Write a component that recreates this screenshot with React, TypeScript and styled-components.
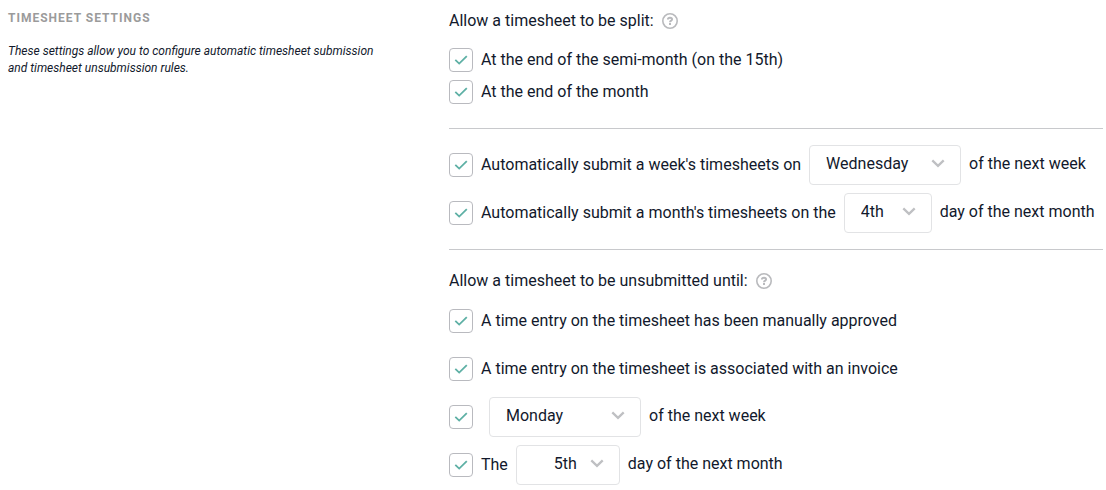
import React, { useId, useState } from "react";
import styled, { createGlobalStyle } from "styled-components";

const GlobalStyle = createGlobalStyle`
  *, *::before, *::after { box-sizing: border-box; }
  body {
    margin: 0;
    background: #ffffff;
    color: #12192c;
    font-family: Roboto, "Liberation Sans", sans-serif;
    font-size: 16px;
    line-height: 24px;
  }
`;

const Page = styled.main`
  display: grid;
  grid-template-columns: minmax(200px, 393px) minmax(0, 1fr);
  column-gap: 48px;
  padding: 9px 3px 4px 8px;
`;

const Intro = styled.header`
  display: flex;
  flex-direction: column;
  gap: 16px;
  padding-right: 12px;
`;

const Title = styled.h1`
  margin: 0;
  color: #9b9b9b;
  font-size: 12px;
  font-weight: 700;
  line-height: 18px;
  letter-spacing: 1px;
  text-transform: uppercase;
`;

const Description = styled.p`
  margin: 0;
  font-size: 12px;
  font-style: italic;
  line-height: 17px;
`;

const Form = styled.form`
  display: flex;
  flex-direction: column;
`;

const Group = styled.section<{ $top?: number; $bottom?: number }>`
  display: flex;
  flex-direction: column;
  gap: 8px;
  padding-top: ${(p) => p.$top ?? 0}px;
  padding-bottom: ${(p) => p.$bottom ?? 0}px;

  & + & {
    border-top: 1px solid #c8c9cc;
  }
`;

const GroupHeading = styled.div<{ $space: number }>`
  display: flex;
  align-items: center;
  gap: 8px;
  margin-bottom: ${(p) => p.$space}px;
`;

const GroupTitle = styled.h2`
  margin: 0;
  font-size: 16px;
  font-weight: 400;
  line-height: 24px;
`;

const HelpButton = styled.button`
  display: flex;
  padding: 0;
  border: 0;
  background: none;
  color: #b9babd;
  cursor: pointer;
`;

const Row = styled.div<{ $tall?: boolean }>`
  display: flex;
  flex-wrap: wrap;
  align-items: center;
  column-gap: 8px;
  min-height: ${(p) => (p.$tall ? 40 : 24)}px;
`;

const Option = styled.label<{ $bare?: boolean }>`
  display: flex;
  align-items: center;
  gap: 8px;
  margin-right: ${(p) => (p.$bare ? 8 : 0)}px;
  cursor: pointer;
`;

const CheckFrame = styled.span`
  position: relative;
  display: flex;
  flex: none;
  width: 24px;
  height: 24px;
`;

const CheckInput = styled.input`
  appearance: none;
  width: 24px;
  height: 24px;
  margin: 0;
  border: 1px solid #b9babf;
  border-radius: 4px;
  background: #ffffff;
  cursor: pointer;

  & + svg {
    visibility: hidden;
  }
  &:checked + svg {
    visibility: visible;
  }
`;

const CheckMark = styled.svg`
  position: absolute;
  inset: 0;
  color: #5eb0a5;
  pointer-events: none;
`;

const SelectFrame = styled.span`
  position: relative;
  display: flex;
`;

const SelectInput = styled.select<{ $width: number; $inset: number }>`
  appearance: none;
  width: ${(p) => p.$width}px;
  height: 40px;
  margin: 0;
  padding: 0 32px 2px ${(p) => p.$inset}px;
  border: 1px solid #e2e3e5;
  border-radius: 4px;
  background: #ffffff;
  color: inherit;
  font: inherit;
  cursor: pointer;
`;

const Chevron = styled.svg`
  position: absolute;
  top: 13px;
  right: 16px;
  color: #bfc0c3;
  pointer-events: none;
`;

const Trailing = styled.span`
  padding-bottom: 2px;
`;

function Help({ label }: { label: string }) {
  return (
    <HelpButton type="button" aria-label={label}>
      <svg width="16" height="16" viewBox="0 0 16 16" fill="none" stroke="currentColor" strokeWidth="1.6">
        <circle cx="8" cy="8" r="7.2" />
        <path d="M5.9 6.5C5.9 5.3 6.7 4.7 8 4.7s2.1.7 2.1 1.7C10.1 7.7 8 7.6 8 9.2" strokeWidth="1.9" />
        <path d="M8 10.1v1.9" strokeWidth="2" />
      </svg>
    </HelpButton>
  );
}

function Check({ children, label }: { children?: React.ReactNode; label?: string }) {
  const id = useId();
  return (
    <Option htmlFor={id} $bare={!children}>
      <CheckFrame>
        <CheckInput id={id} type="checkbox" defaultChecked aria-label={label} />
        <CheckMark width="24" height="24" viewBox="0 0 24 24" fill="none" stroke="currentColor" strokeWidth="1.8">
          <path d="M6.3 11.8 10.2 15.6 17.8 8.1" />
        </CheckMark>
      </CheckFrame>
      {children && <span>{children}</span>}
    </Option>
  );
}

interface PickerProps {
  label: string;
  options: string[];
  initial: string;
  width: number;
  inset?: number;
}

function Picker({ label, options, initial, width, inset = 16 }: PickerProps) {
  const [value, setValue] = useState(initial);
  return (
    <SelectFrame>
      <SelectInput
        $width={width}
        $inset={inset}
        aria-label={label}
        value={value}
        onChange={(e) => setValue(e.target.value)}
      >
        {options.map((o) => (
          <option key={o}>{o}</option>
        ))}
      </SelectInput>
      <Chevron width="14" height="10" viewBox="0 0 14 10" fill="none" stroke="currentColor" strokeWidth="2.3">
        <path d="M1.3 2.3 7 7.8 12.7 2.3" />
      </Chevron>
    </SelectFrame>
  );
}

const weekdays = ["Monday", "Tuesday", "Wednesday", "Thursday", "Friday", "Saturday", "Sunday"];
const monthDays = ["1st", "2nd", "3rd", "4th", "5th", "6th", "7th", "8th", "9th", "10th"];

export default function App() {
  return (
    <>
      <GlobalStyle />
      <Page>
        <Intro>
          <Title>Timesheet settings</Title>
          <Description>
            These settings allow you to configure automatic timesheet submission and timesheet unsubmission rules.
          </Description>
        </Intro>
        <Form>
          <Group $bottom={24}>
            <GroupHeading $space={7}>
              <GroupTitle>Allow a timesheet to be split:</GroupTitle>
              <Help label="About splitting timesheets" />
            </GroupHeading>
            <Row>
              <Check>At the end of the semi-month (on the 15th)</Check>
            </Row>
            <Row>
              <Check>At the end of the month</Check>
            </Row>
          </Group>
          <Group $top={16} $bottom={16}>
            <Row $tall>
              <Check>Automatically submit a week's timesheets on</Check>
              <Picker label="Submission weekday" options={weekdays} initial="Wednesday" width={152} />
              <Trailing>of the next week</Trailing>
            </Row>
            <Row $tall>
              <Check>Automatically submit a month's timesheets on the</Check>
              <Picker label="Submission day of the month" options={monthDays} initial="4th" width={88} />
              <Trailing>day of the next month</Trailing>
            </Row>
          </Group>
          <Group $top={19}>
            <GroupHeading $space={0}>
              <GroupTitle>Allow a timesheet to be unsubmitted until:</GroupTitle>
              <Help label="About unsubmitting timesheets" />
            </GroupHeading>
            <Row $tall>
              <Check>A time entry on the timesheet has been manually approved</Check>
            </Row>
            <Row $tall>
              <Check>A time entry on the timesheet is associated with an invoice</Check>
            </Row>
            <Row $tall>
              <Check label="Until a weekday of the next week" />
              <Picker label="Unsubmission weekday" options={weekdays} initial="Monday" width={152} />
              <Trailing>of the next week</Trailing>
            </Row>
            <Row $tall>
              <Check>The</Check>
              <Picker label="Unsubmission day of the month" options={monthDays} initial="5th" width={104} inset={37} />
              <Trailing>day of the next month</Trailing>
            </Row>
          </Group>
        </Form>
      </Page>
    </>
  );
}
